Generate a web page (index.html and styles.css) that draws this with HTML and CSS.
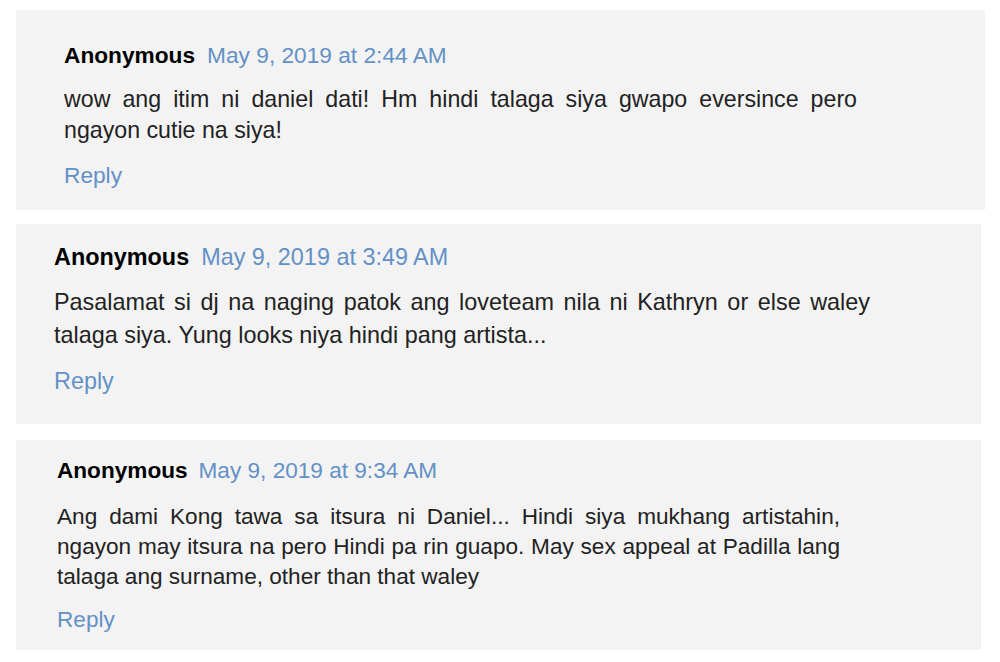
FILE: index.html
```html
<!DOCTYPE html>
<html>
  <head>
    <title>Comments</title>
    <link rel="stylesheet" href="styles.css">
  </head>
  <body>
    <div class="comments">
      <div class="comment comment-one">
        <div class="comment-head">
          <span class="author">Anonymous</span>
          <a class="stamp" href="#">May 9, 2019 at 2:44 AM</a>
        </div>
        <p class="comment-body">wow ang itim ni daniel dati! Hm hindi talaga siya gwapo eversince pero ngayon cutie na siya!</p>
        <a class="reply" href="#">Reply</a>
      </div>

      <div class="comment comment-two">
        <div class="comment-head">
          <span class="author">Anonymous</span>
          <a class="stamp" href="#">May 9, 2019 at 3:49 AM</a>
        </div>
        <p class="comment-body">Pasalamat si dj na naging patok ang loveteam nila ni Kathryn or else waley talaga siya. Yung looks niya hindi pang artista...</p>
        <a class="reply" href="#">Reply</a>
      </div>

      <div class="comment comment-three">
        <div class="comment-head">
          <span class="author">Anonymous</span>
          <a class="stamp" href="#">May 9, 2019 at 9:34 AM</a>
        </div>
        <p class="comment-body">Ang dami Kong tawa sa itsura ni Daniel... Hindi siya mukhang artistahin, ngayon may itsura na pero Hindi pa rin guapo. May sex appeal at Padilla lang talaga ang surname, other than that waley</p>
        <a class="reply" href="#">Reply</a>
      </div>
    </div>
  </body>
</html>
```

FILE: styles.css
```css
body {
  margin: 0;
  background: #fff;
  color: #222;
  font-family: "Liberation Sans", Arial, sans-serif;
}
.comments {
  display: flex;
  flex-direction: column;
  align-items: flex-start;
  padding: 10px 0 0 16px;
}
.comment {
  background: #f3f3f3;
  display: flex;
  flex-direction: column;
  align-items: flex-start;
  box-sizing: border-box;
}
.comment-head {
  display: flex;
  align-items: baseline;
  gap: 12px;
  line-height: 30px;
}
.author {
  color: #000;
  font-weight: bold;
}
.stamp, .reply {
  color: #6391c6;
  text-decoration: none;
}
.comment-body {
  margin: 0;
  text-align: justify;
}

/* first card */
.comment-one {
  width: 969px;
  height: 200px;
  padding: 30px 0 0 48px;
  font-size: 22.7px;
}
.comment-one .comment-body {
  width: 793px;
  margin-top: 14px;
  font-size: 23.2px;
  line-height: 31px;
}
.comment-one .reply {
  margin-top: 14px;
  line-height: 31px;
}

/* second card */
.comment-two {
  width: 965px;
  height: 200px;
  margin-top: 14px;
  padding: 18px 0 0 38px;
  font-size: 23.4px;
}
.comment-two .comment-body {
  width: 816px;
  margin-top: 14px;
  line-height: 33px;
}
.comment-two .reply {
  margin-top: 13px;
  line-height: 33px;
}

/* third card */
.comment-three {
  width: 965px;
  height: 210px;
  margin-top: 16px;
  padding: 17px 0 0 41px;
  font-size: 22.6px;
}
.comment-three .comment-head {
  gap: 11px;
  line-height: 28px;
}
.comment-three .comment-body {
  width: 783px;
  margin-top: 17px;
  line-height: 30px;
}
.comment-three .reply {
  margin-top: 13px;
  line-height: 30px;
}
```
